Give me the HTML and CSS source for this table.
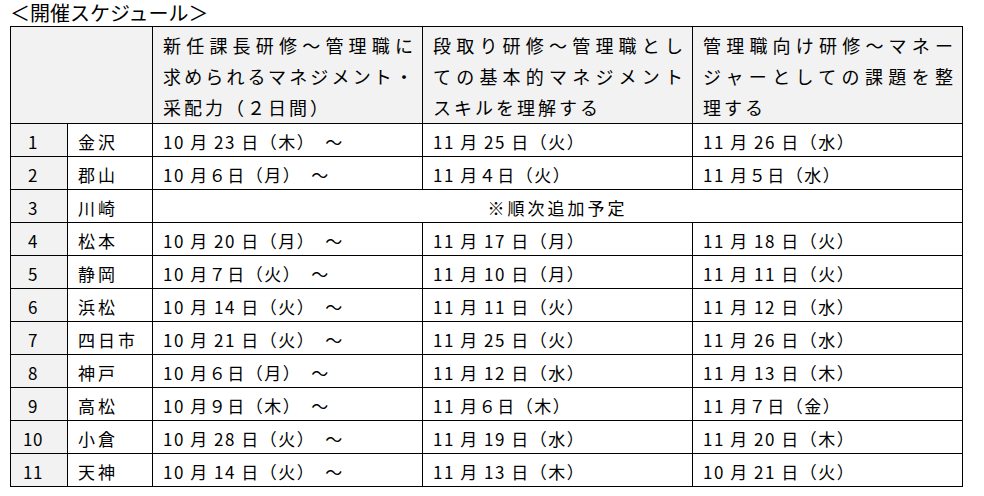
FILE: index.html
```html
<!DOCTYPE html>
<html lang="ja">
<head>
<meta charset="utf-8">
<title>開催スケジュール</title>
<link rel="stylesheet" href="styles.css">
</head>
<body>
<h2 class="title">＜開催スケジュール＞</h2>
<table class="schedule">
  <colgroup>
    <col class="c-no">
    <col class="c-city">
    <col class="c-course">
    <col class="c-course">
    <col class="c-course">
  </colgroup>
  <thead>
    <tr>
      <th class="blank" colspan="2"></th>
      <th class="course"><span class="jl">新任課長研修～管理職に</span><span class="jl">求められるマネジメント・</span><span class="ll">采配力（２日間）</span></th>
      <th class="course"><span class="jl">段取り研修～管理職とし</span><span class="jl">ての基本的マネジメント</span><span class="ll">スキルを理解する</span></th>
      <th class="course"><span class="jl">管理職向け研修～マネー</span><span class="jl">ジャーとしての課題を整</span><span class="ll">理する</span></th>
    </tr>
  </thead>
  <tbody>
    <tr><td class="no">1</td><td class="city">金沢</td><td class="date">10 月 23 日（木）　～</td><td class="date">11 月 25 日（火）</td><td class="date">11 月 26 日（水）</td></tr>
    <tr><td class="no">2</td><td class="city">郡山</td><td class="date">10 月６日（月）　～</td><td class="date">11 月４日（火）</td><td class="date">11 月５日（水）</td></tr>
    <tr><td class="no">3</td><td class="city">川崎</td><td class="note" colspan="3">※順次追加予定</td></tr>
    <tr><td class="no">4</td><td class="city">松本</td><td class="date">10 月 20 日（月）　～</td><td class="date">11 月 17 日（月）</td><td class="date">11 月 18 日（火）</td></tr>
    <tr><td class="no">5</td><td class="city">静岡</td><td class="date">10 月７日（火）　～</td><td class="date">11 月 10 日（月）</td><td class="date">11 月 11 日（火）</td></tr>
    <tr><td class="no">6</td><td class="city">浜松</td><td class="date">10 月 14 日（火）　～</td><td class="date">11 月 11 日（火）</td><td class="date">11 月 12 日（水）</td></tr>
    <tr><td class="no">7</td><td class="city">四日市</td><td class="date">10 月 21 日（火）　～</td><td class="date">11 月 25 日（火）</td><td class="date">11 月 26 日（水）</td></tr>
    <tr><td class="no">8</td><td class="city">神戸</td><td class="date">10 月６日（月）　～</td><td class="date">11 月 12 日（水）</td><td class="date">11 月 13 日（木）</td></tr>
    <tr><td class="no">9</td><td class="city">高松</td><td class="date">10 月９日（木）　～</td><td class="date">11 月６日（木）</td><td class="date">11 月７日（金）</td></tr>
    <tr><td class="no">10</td><td class="city">小倉</td><td class="date">10 月 28 日（火）　～</td><td class="date">11 月 19 日（水）</td><td class="date">11 月 20 日（木）</td></tr>
    <tr><td class="no">11</td><td class="city">天神</td><td class="date">10 月 14 日（火）　～</td><td class="date">11 月 13 日（木）</td><td class="date">10 月 21 日（火）</td></tr>
  </tbody>
</table>
</body>
</html>
```
FILE: styles.css
```css
html, body {
  margin: 0;
  padding: 0;
  background: #ffffff;
}

body {
  font-family: "Noto Sans CJK JP", "Noto Sans", sans-serif;
  color: #000000;
}

.title {
  margin: 0;
  padding-left: 10px;
  height: 26px;
  font-size: 20px;
  line-height: 26px;
  font-weight: 400;
}

.schedule {
  margin-left: 10px;
  border-collapse: collapse;
  table-layout: fixed;
  width: 951px;
  border: 1px solid #000;
}

.c-no { width: 57px; }
.c-city { width: 85px; }
.c-course { width: 270px; }

.schedule th,
.schedule td {
  border: 1px solid #000;
  padding: 0;
  font-weight: 400;
  text-align: left;
  white-space: nowrap;
}

.schedule th {
  background: #f2f2f2;
  height: 93px;
  vertical-align: top;
}

.course {
  padding: 3px 9px 0 10px !important;
  font-size: 18px;
  line-height: 31px;
}

.jl {
  display: block;
  text-align: justify;
  text-align-last: justify;
}

.ll {
  display: block;
  letter-spacing: 3px;
}

.schedule td {
  height: 28px;
  font-size: 17px;
  line-height: 28px;
  padding-top: 4px;
  vertical-align: top;
}

.no {
  background: #f2f2f2;
  text-align: center !important;
  padding-right: 12px !important;
  letter-spacing: 0.5px;
}

.city {
  padding-left: 10px !important;
  letter-spacing: 3px;
}

.date {
  padding-left: 10px !important;
  letter-spacing: 1.5px;
}

.note {
  text-align: center !important;
  letter-spacing: 3px;
}
```
